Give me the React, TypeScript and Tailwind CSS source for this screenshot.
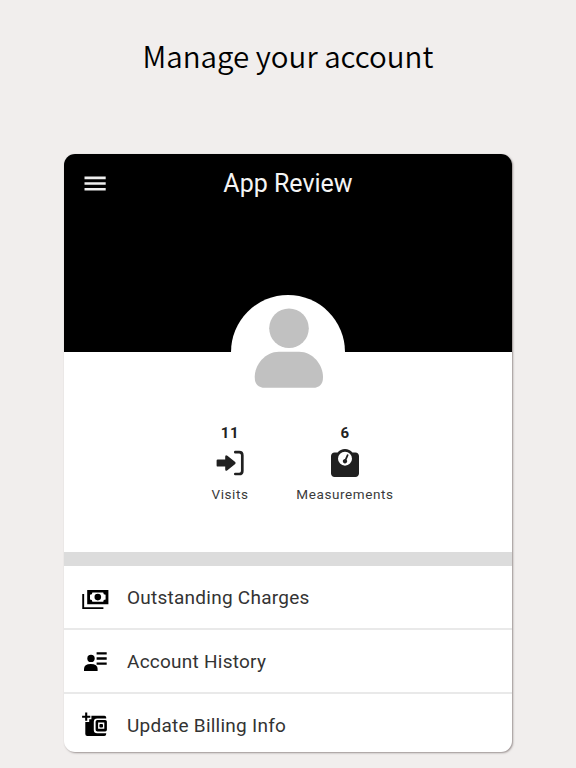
import type { ReactNode } from 'react'
import { FaWeightScale } from 'react-icons/fa6'

interface StatProps {
  value: number
  label: string
  width: string
  icon: ReactNode
}

interface RowProps {
  label: string
  icon: ReactNode
}

function VisitsIcon() {
  return (
    <svg width="28" height="28" viewBox="0 0 28 28">
      <path
        d="M1.8 10.4H9.2V7.8Q9.2 5.4 11.4 6.8L19.2 13Q20.1 14 19.2 15L11.4 21.2Q9.2 22.6 9.2 20.2V17.6H1.8Q.6 17.6.6 16.4V11.6Q.6 10.4 1.8 10.4Z"
        fill="#202020"
      />
      <path d="M19.3 3.2H23.2Q26.3 3.2 26.3 6.3V21.9Q26.3 25 23.2 25H19.3" fill="none" stroke="#202020" strokeWidth="2.7" strokeLinecap="round" />
    </svg>
  )
}

function CashIcon() {
  return (
    <svg width="28" height="28" viewBox="0 -5.5 28 28">
      <path d="M1.2 5.5V19.6H21.4" fill="none" stroke="#000" strokeWidth="1.9" />
      <path
        d="M5.2 1.4H26.4V15.7H5.2ZM10.4 3.9Q10.4 6.2 8 6.2V10.9Q10.4 10.9 10.4 13.2H21.2Q21.2 10.9 23.6 10.9V6.2Q21.2 6.2 21.2 3.9Z"
        fill="#000"
        fillRule="evenodd"
      />
      <circle cx="15.8" cy="8.6" r="3.3" />
    </svg>
  )
}

function HistoryIcon() {
  return (
    <svg width="28" height="24" viewBox="0 0 28 24">
      <circle cx="9" cy="9.4" r="3.7" />
      <path d="M2 21.9V20Q2 14.9 8.8 14.9T15.6 20V21.9Z" />
      <path d="M14.6 4.4H24.7M14.6 9.5H24.7M14.6 14.6H24.7" stroke="#000" strokeWidth="2.3" />
    </svg>
  )
}

function WalletIcon() {
  return (
    <svg width="28" height="26" viewBox="0 0 28 26">
      <path d="M4.2 .6V8.8M.1 4.7H8.3" stroke="#000" strokeWidth="2.1" />
      <path d="M9.4 3.8H22.4Q24.2 3.8 24.2 5.6V6.4H15.2Q11.8 6.4 11.8 9.8V18Q11.8 21.3 15.2 21.3H24.2V22Q24.2 24 22.2 24H5.3Q3.3 24 3.3 22V9.9H7.2V7.2H9.4Z" />
      <path
        d="M15.4 7.9H23.2Q24.9 7.9 24.9 9.6V17.8Q24.9 19.5 23.2 19.5H15.4Q13.6 19.5 13.6 17.7V9.7Q13.6 7.9 15.4 7.9ZM16.1 10.6V16.8H22.3V10.6Z"
        fillRule="evenodd"
      />
      <rect x="17.4" y="11.9" width="3.6" height="3.6" rx="1" />
    </svg>
  )
}

function Stat({ value, label, width, icon }: StatProps) {
  return (
    <div className={`flex flex-col items-center ${width}`}>
      <span className="text-[15px] leading-4 font-bold tracking-[0.6px] text-[#222]">{value}</span>
      <div className="mt-2 h-7">{icon}</div>
      <span className="mt-[9px] text-[13.5px] leading-4 tracking-[0.6px] whitespace-nowrap text-[#3a3a3a]">{label}</span>
    </div>
  )
}

function Row({ label, icon }: RowProps) {
  return (
    <div className="flex h-16 shrink-0 items-center border-b-2 border-[#e9e9e9] pl-[18px]">
      <div className="w-[45px] shrink-0">{icon}</div>
      <span className="pt-px text-[19px] leading-6 tracking-[0.25px] text-[#333]">{label}</span>
    </div>
  )
}

export default function App() {
  return (
    <div className="flex h-[768px] w-[576px] flex-col items-center overflow-hidden bg-[#f1eeed] font-['Roboto','Liberation_Sans',sans-serif]">
      <h1 className="mt-8 font-['Noto_Sans_CJK_SC',sans-serif] text-[29.5px] leading-[46px] font-[350] whitespace-nowrap text-black">
        Manage your account
      </h1>

      <main className="mt-[76px] flex h-[598px] w-[448px] flex-col overflow-hidden rounded-[11px] bg-white shadow-[1px_1px_2px_rgba(70,55,55,0.5)]">
        <header className="h-[198px] shrink-0 bg-black">
          <div className="flex h-[60px] items-center">
            <button type="button" aria-label="Menu" className="ml-5 w-[22px]">
              <svg width="22" height="16" viewBox="0 0 22 16">
                <path d="M.5 1.9H21.7M.5 7.5H21.7M.5 13.3H21.7" stroke="#eee" strokeWidth="2.6" />
              </svg>
            </button>
            <span className="mr-[42px] flex-1 text-center text-[25px] leading-8 text-[#f4f4f4]">App Review</span>
          </div>
        </header>

        {/* Avatar sits half over the black header */}
        <div className="relative -mt-[57px] ml-[167px] h-[114px] w-[114px] shrink-0 rounded-full bg-white">
          <svg width="114" height="114" viewBox="0 0 114 114" fill="#c1c1c1">
            <circle cx="58" cy="33.3" r="19.8" />
            <path d="M48 56.8H68C82 56.8 92 70 92 82Q92 92.8 82 92.8H34Q23.7 92.8 23.7 82C23.7 70 34 56.8 48 56.8Z" />
          </svg>
        </div>

        <div className="mt-4 flex h-[127px] shrink-0 pl-[124px]">
          <Stat value={11} label="Visits" width="w-[84px]" icon={<VisitsIcon />} />
          <Stat value={6} label="Measurements" width="w-[146px]" icon={<FaWeightScale size={28} color="#202020" />} />
        </div>

        <div className="h-3.5 shrink-0 bg-[#dcdcdc]" />

        <Row label="Outstanding Charges" icon={<CashIcon />} />
        <Row label="Account History" icon={<HistoryIcon />} />
        <Row label="Update Billing Info" icon={<WalletIcon />} />
      </main>
    </div>
  )
}
